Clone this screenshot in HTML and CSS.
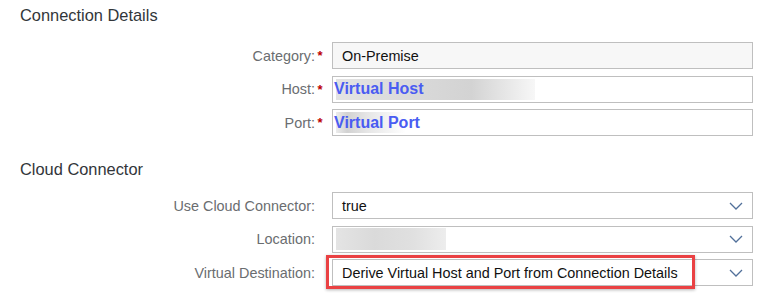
FILE: index.html
```html
<!DOCTYPE html>
<html lang="en">
<head>
<meta charset="utf-8">
<title>Connection Details</title>
<link rel="stylesheet" href="styles.css">
</head>
<body>
  <section class="section section-first">
    <h2 class="section-title">Connection Details</h2>
    <div class="form form-first">
      <div class="label">Category:<span class="req">*</span></div>
      <div class="field readonly"><span class="value">On-Premise</span></div>

      <div class="label">Host:<span class="req">*</span></div>
      <div class="field masked masked-host"><span class="value blue">Virtual Host</span></div>

      <div class="label">Port:<span class="req">*</span></div>
      <div class="field masked masked-port"><span class="value blue">Virtual Port</span></div>
    </div>
  </section>

  <section class="section section-second">
    <h2 class="section-title">Cloud Connector</h2>
    <div class="form form-second">
      <div class="label">Use Cloud Connector:<span class="req"></span></div>
      <div class="field select"><span class="value">true</span>
        <svg class="chev" width="14" height="8" viewBox="0 0 14 8"><polyline points="1,1 7,7 13,1" fill="none" stroke="#51709a" stroke-width="1.3"/></svg>
      </div>

      <div class="label">Location:<span class="req"></span></div>
      <div class="field select masked-loc"><span class="value"></span>
        <svg class="chev" width="14" height="8" viewBox="0 0 14 8"><polyline points="1,1 7,7 13,1" fill="none" stroke="#51709a" stroke-width="1.3"/></svg>
      </div>

      <div class="label">Virtual Destination:<span class="req"></span></div>
      <div class="field select highlighted"><span class="value">Derive Virtual Host and Port from Connection Details</span>
        <svg class="chev" width="14" height="8" viewBox="0 0 14 8"><polyline points="1,1 7,7 13,1" fill="none" stroke="#51709a" stroke-width="1.3"/></svg>
        <div class="callout"></div>
      </div>
    </div>
  </section>
</body>
</html>
```

FILE: styles.css
```css
html, body {
  margin: 0;
  padding: 0;
  background: #ffffff;
}

body {
  font-family: "Liberation Sans", Arial, sans-serif;
  width: 776px;
  height: 295px;
  overflow: hidden;
}

.section-title {
  margin: 0;
  padding-left: 20px;
  height: 30px;
  line-height: 30px;
  font-size: 16.4px;
  font-weight: normal;
  color: #32363a;
}

.section-second {
  margin-top: 18px;
}

.form {
  display: grid;
  grid-template-columns: 324px 421px;
  column-gap: 8px;
  row-gap: 6.5px;
}

.form-first {
  margin-top: 12px;
}

.form-second {
  margin-top: 8px;
}

.label {
  display: flex;
  align-items: center;
  justify-content: flex-end;
  font-size: 14.4px;
  color: #6a6d70;
  height: 27px;
}

.req {
  display: inline-block;
  width: 8px;
  text-align: center;
  color: #bb0000;
  font-size: 13px;
  font-weight: bold;
  margin-left: 1px;
}

.field {
  box-sizing: border-box;
  height: 27px;
  border: 1px solid #bfbfbf;
  background: #ffffff;
  display: flex;
  align-items: center;
  padding-left: 9px;
  position: relative;
}

.value {
  font-size: 14.4px;
  color: #111111;
  white-space: nowrap;
  flex: 1;
}

.readonly {
  background: #f7f7f7;
}

.masked {
  padding-left: 1px;
}

.blue {
  color: #4a5cf2;
  font-weight: bold;
  font-size: 16px;
}

.masked-host {
  background:
    linear-gradient(to right, #e3e3e3 0%, #d8d8d8 45%, #d3d3d3 68%, #f7f7f7 100%) no-repeat 3px 2px / 199px 21px,
    #ffffff;
}

.masked-port {
  background:
    linear-gradient(to right, #ececec 0%, #d2d2d2 16%, #e6e6e6 45%, #ffffff 100%) no-repeat 3px 2px / 70px 21px,
    #ffffff;
}

.masked-loc {
  background:
    linear-gradient(to right, #e4e4e4 0%, #dadada 35%, #e0e0e0 70%, #ededed 100%) no-repeat 3px 1px / 110px 22px,
    #ffffff;
}

.chev {
  margin-right: 9px;
  flex: none;
}

.callout {
  position: absolute;
  left: -7px;
  top: -5px;
  width: 369px;
  height: 34px;
  box-sizing: border-box;
  border: 3px solid #ea4143;
  box-shadow: 0 1px 3px rgba(0, 0, 0, 0.3);
  pointer-events: none;
}
```
